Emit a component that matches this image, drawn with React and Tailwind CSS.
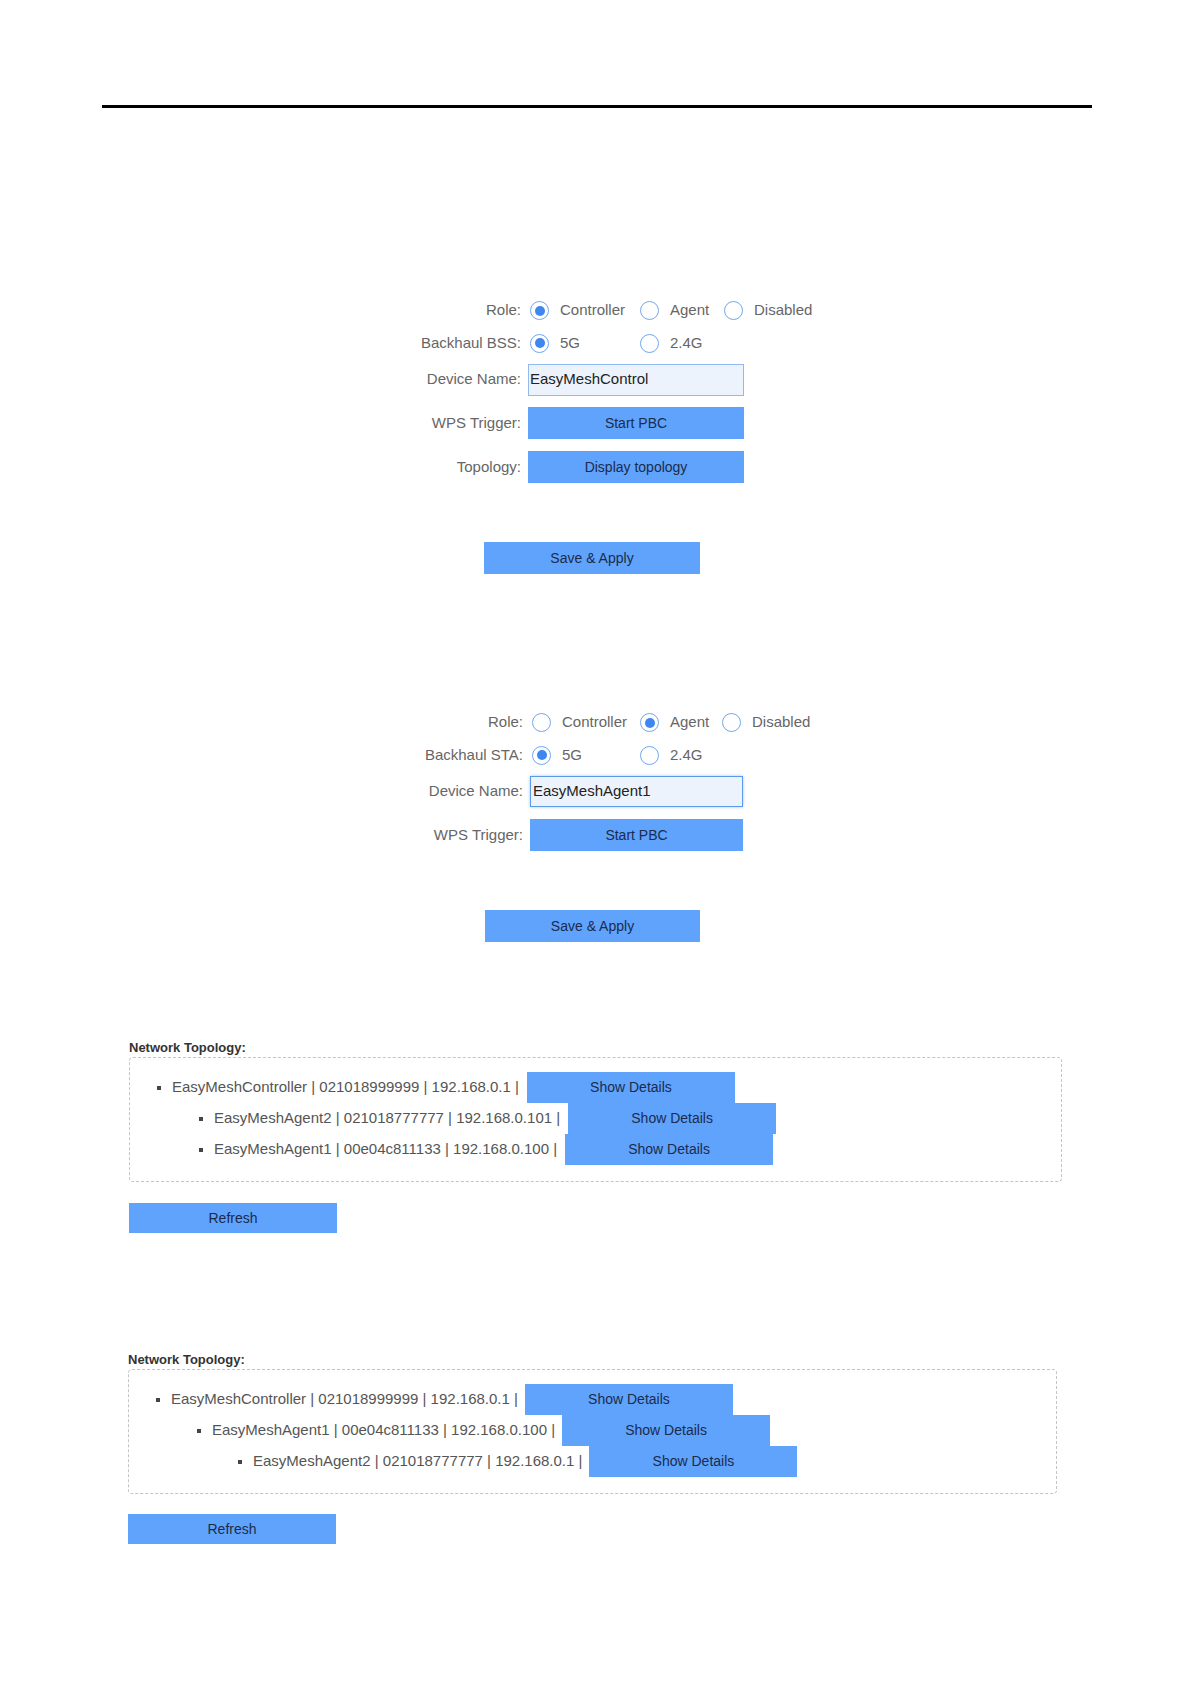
import React from "react";

const FONT = { fontFamily: '"Liberation Sans", Arial, sans-serif' };

// ============================================================
// SMALL PIECES
// ============================================================
const Radio = ({ checked }) => (
  <span className="ml-[2px] w-[19px] h-[19px] rounded-full border-[1.5px] border-[#6fa7ee] flex items-center justify-center shrink-0">
    {checked && <span className="w-[10px] h-[10px] rounded-full bg-[#3d87ef]" />}
  </span>
);

const Option = ({ checked, label, width }) => (
  <span className={`flex items-center ${width}`}>
    <Radio checked={checked} />
    <span className="ml-[11px] text-[15px] text-[#666]">{label}</span>
  </span>
);

const Row = ({ label, height, labelWidth, children }) => (
  <div className={`flex items-center ${height}`}>
    <div className={`${labelWidth} text-right text-[15px] text-[#666] pr-[7px]`}>{label}</div>
    {children}
  </div>
);

const BlueButton = ({ children, className }) => (
  <div
    className={`bg-[#5fa3fc] text-[#1c2b4c] text-[14px] flex items-center justify-center ${className}`}
  >
    {children}
  </div>
);

// ============================================================
// TOPOLOGY BOX
// ============================================================
const TopoRow = ({ pad, text, btnGap }) => (
  <div className={`flex items-center h-[31px] ${pad}`}>
    <span className="w-[4px] h-[4px] bg-[#444] shrink-0" />
    <span className="ml-[11px] text-[15px] text-[#555] whitespace-nowrap">{text}</span>
    <BlueButton className={`${btnGap} w-[208px] h-[31px]`}>Show Details</BlueButton>
  </div>
);

const Topology = ({ rows, boxWidth, ml, labelMt, refreshMt, btnGap }) => (
  <div className={`${ml} ${labelMt}`}>
    <div className="h-[19px] flex items-center text-[13px] font-bold text-[#333]">Network Topology:</div>
    <div
      className={`${boxWidth} border border-dashed border-[#c4c4c4] rounded-[4px] pt-[14px] pb-[16px]`}
    >
      {rows.map((r, i) => (
        <TopoRow key={i} pad={r.pad} text={r.text} btnGap={btnGap} />
      ))}
    </div>
    <BlueButton className={`${refreshMt} w-[208px] h-[30px]`}>Refresh</BlueButton>
  </div>
);

// ============================================================
// PAGE
// ============================================================
export default function App() {
  return (
    <div className="w-[1191px] h-[1684px] bg-white relative overflow-hidden" style={FONT}>
      <div className="pt-[105px] pl-[102px]">
        <div className="w-[990px] h-[3px] bg-black" />
      </div>

      {/* Controller form */}
      <div className="mt-[186px] pl-[391px]">
        <Row label="Role:" height="h-[33px]" labelWidth="w-[137px]">
          <Option checked label="Controller" width="w-[110px]" />
          <Option label="Agent" width="w-[84px]" />
          <Option label="Disabled" width="" />
        </Row>
        <Row label="Backhaul BSS:" height="h-[32px]" labelWidth="w-[137px]">
          <Option checked label="5G" width="w-[110px]" />
          <Option label="2.4G" width="" />
        </Row>
        <Row label="Device Name:" height="h-[41px]" labelWidth="w-[137px]">
          <div className="w-[216px] h-[32px] border border-[#92b9ee] bg-[#edf3fd] flex items-center pl-[1px] text-[15px] text-[#222]">
            EasyMeshControl
          </div>
        </Row>
        <Row label="WPS Trigger:" height="h-[46px]" labelWidth="w-[137px]">
          <BlueButton className="w-[216px] h-[32px]">Start PBC</BlueButton>
        </Row>
        <Row label="Topology:" height="h-[42px]" labelWidth="w-[137px]">
          <BlueButton className="w-[216px] h-[32px]">Display topology</BlueButton>
        </Row>
      </div>
      <div className="mt-[54px] pl-[484px]">
        <BlueButton className="w-[216px] h-[32px]">Save &amp; Apply</BlueButton>
      </div>

      {/* Agent form */}
      <div className="mt-[132px] pl-[393px]">
        <Row label="Role:" height="h-[33px]" labelWidth="w-[137px]">
          <Option label="Controller" width="w-[108px]" />
          <Option checked label="Agent" width="w-[82px]" />
          <Option label="Disabled" width="" />
        </Row>
        <Row label="Backhaul STA:" height="h-[32px]" labelWidth="w-[137px]">
          <Option checked label="5G" width="w-[108px]" />
          <Option label="2.4G" width="" />
        </Row>
        <Row label="Device Name:" height="h-[41px]" labelWidth="w-[137px]">
          <div className="w-[213px] h-[31px] border border-[#5d9ae6] bg-[#edf3fd] shadow-[0_0_3px_rgba(80,140,220,0.5)] flex items-center pl-[2px] text-[15px] text-[#222]">
            EasyMeshAgent1
          </div>
        </Row>
        <Row label="WPS Trigger:" height="h-[46px]" labelWidth="w-[137px]">
          <BlueButton className="w-[213px] h-[32px]">Start PBC</BlueButton>
        </Row>
      </div>
      <div className="mt-[52px] pl-[485px]">
        <BlueButton className="w-[215px] h-[32px]">Save &amp; Apply</BlueButton>
      </div>

      {/* Topology views */}
      <Topology
        ml="ml-[129px]"
        labelMt="mt-[96px]"
        refreshMt="mt-[21px]"
        boxWidth="w-[933px]"
        btnGap="ml-[8px]"
        rows={[
          { pad: "pl-[27px]", text: "EasyMeshController | 021018999999 | 192.168.0.1 |" },
          { pad: "pl-[69px]", text: "EasyMeshAgent2 | 021018777777 | 192.168.0.101 |" },
          { pad: "pl-[69px]", text: "EasyMeshAgent1 | 00e04c811133 | 192.168.0.100 |" },
        ]}
      />
      <Topology
        ml="ml-[128px]"
        labelMt="mt-[117px]"
        refreshMt="mt-[20px]"
        boxWidth="w-[929px]"
        btnGap="ml-[7px]"
        rows={[
          { pad: "pl-[27px]", text: "EasyMeshController | 021018999999 | 192.168.0.1 |" },
          { pad: "pl-[68px]", text: "EasyMeshAgent1 | 00e04c811133 | 192.168.0.100 |" },
          { pad: "pl-[109px]", text: "EasyMeshAgent2 | 021018777777 | 192.168.0.1 |" },
        ]}
      />
    </div>
  );
}
